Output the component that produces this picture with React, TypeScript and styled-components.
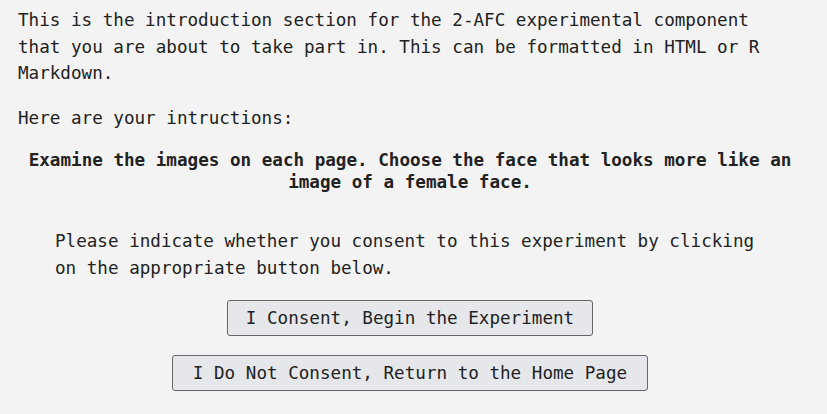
import React from 'react';
import styled, { createGlobalStyle } from 'styled-components';

const GlobalStyle = createGlobalStyle`
  html, body {
    margin: 0;
    padding: 0;
    background: #f3f3f3;
  }
  body {
    font-family: 'DejaVu Sans Mono', 'Liberation Mono', monospace;
    font-size: 17.6px;
    color: #222;
  }
`;

const Page = styled.div`
  padding: 7px 25px 20px 18px;
  display: flex;
  flex-direction: column;
`;

const Text = styled.p<{ $gap?: number }>`
  margin: ${p => p.$gap ?? 0}px 6px 0 0;
  line-height: 26.5px;
`;

const Instruction = styled.p`
  margin: 18px 0 0 0;
  line-height: 22px;
  font-weight: bold;
  text-align: center;
`;

const Consent = styled.p`
  margin: 34.5px 37px 0 37px;
  line-height: 27px;
`;

const Actions = styled.div`
  margin-top: 18.5px;
  display: flex;
  flex-direction: column;
  align-items: center;
  gap: 19px;
`;

const Button = styled.button<{ $pad: number }>`
  height: 36px;
  padding: 0 ${p => p.$pad}px;
  background: #e5e7ea;
  border: 1px solid #666;
  border-radius: 3px;
  font-family: inherit;
  font-size: 17.6px;
  color: #222;
  cursor: pointer;
`;

const App = () => {
  const handleClick = () => {};

  return (
    <>
      <GlobalStyle />
      <Page>
        <Text>
          This is the introduction section for the 2-AFC experimental component
          that you are about to take part in. This can be formatted in HTML or R
          Markdown.
        </Text>
        <Text $gap={18}>Here are your intructions:</Text>
        <Instruction>
          Examine the images on each page. Choose the face that looks more like
          an image of a female face.
        </Instruction>
        <Consent>
          Please indicate whether you consent to this experiment by clicking on
          the appropriate button below.
        </Consent>
        <Actions>
          <Button type="button" $pad={18} onClick={handleClick}>
            I Consent, Begin the Experiment
          </Button>
          <Button type="button" $pad={20} onClick={handleClick}>
            I Do Not Consent, Return to the Home Page
          </Button>
        </Actions>
      </Page>
    </>
  );
};

export default App;
